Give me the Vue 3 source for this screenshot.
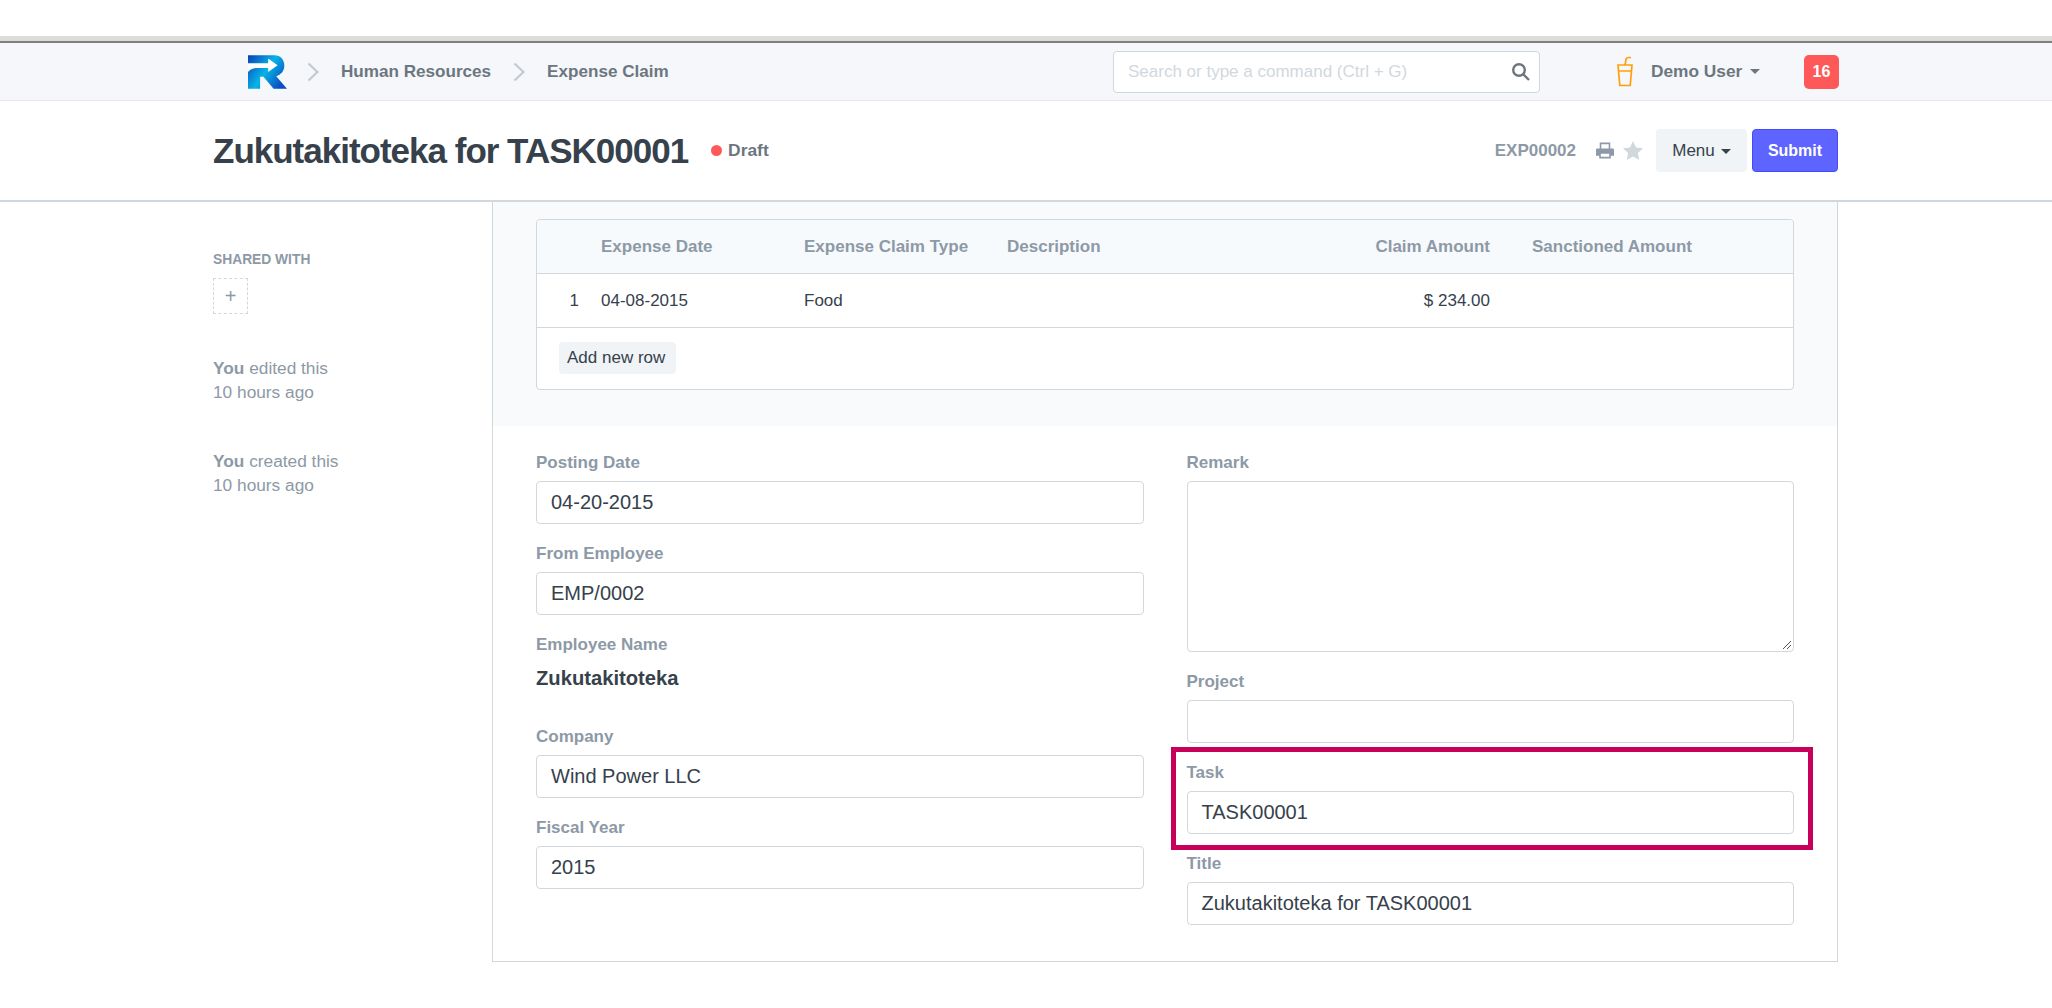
<script setup>
const leftFields = [
  { label: 'Posting Date', value: '04-20-2015' },
  { label: 'From Employee', value: 'EMP/0002' },
  { label: 'Employee Name', value: 'Zukutakitoteka', plain: true },
  { label: 'Company', value: 'Wind Power LLC' },
  { label: 'Fiscal Year', value: '2015' },
]
const rightFields = [
  { label: 'Project', value: '' },
  { label: 'Task', value: 'TASK00001' },
  { label: 'Title', value: 'Zukutakitoteka for TASK00001' },
]
</script>

<template>
  <div class="page">
    <div class="chrome"></div>
    <nav class="nav">
      <div class="wrap nav-in">
        <svg class="logo" viewBox="0 0 116 100">
          <defs>
            <linearGradient id="rg" x1="0" y1="0" x2="1" y2="0.6">
              <stop offset="0" stop-color="#0a3fb8" />
              <stop offset="0.55" stop-color="#08b4e6" />
              <stop offset="1" stop-color="#0a4fc4" />
            </linearGradient>
          </defs>
          <path fill="url(#rg)" d="M0 0H78C98 0 108 14 108 31C108 48 98 58 84 63L116 100H76L46 64H36V100H0Z" />
          <path fill="#fff" d="M0 24H60V10L88 30L60 50V38H28C14 38 6 42 0 50Z" />
        </svg>
        <svg class="chev" viewBox="0 0 12 20"><path d="M1.5 1.5L10.5 10L1.5 18.5" /></svg>
        <span class="crumb">Human Resources</span>
        <svg class="chev" viewBox="0 0 12 20"><path d="M1.5 1.5L10.5 10L1.5 18.5" /></svg>
        <span class="crumb">Expense Claim</span>
        <div class="search">
          <span class="placeholder">Search or type a command (Ctrl + G)</span>
          <svg class="search-ic" viewBox="0 0 20 20"><circle cx="8" cy="8" r="5.8" /><path d="M12.5 12.5L18 18" /></svg>
        </div>
        <svg class="cup" viewBox="0 0 16 31">
          <path d="M8 9L9 3.5Q9.4 1.5 11.5 1.5H14" />
          <path d="M1 9H15L13.2 29.5H2.8ZM1.6 15H14.4" />
        </svg>
        <span class="user">Demo User</span>
        <span class="caret user-caret"></span>
        <span class="badge">16</span>
      </div>
    </nav>
    <header class="head">
      <div class="wrap head-in">
        <h1>Zukutakitoteka for TASK00001</h1>
        <span class="dot"></span>
        <span class="status">Draft</span>
        <span class="docname">EXP00002</span>
        <svg class="print" viewBox="0 0 18 18">
          <path d="M4 7V1.5H14V7H16.5A1 1 0 0 1 17.5 8V14H14.5V16.5H3.5V14H.5V8A1 1 0 0 1 1.5 7ZM5.5 7H12.5V3H5.5ZM5 12V15H13V12Z" fill-rule="evenodd" />
        </svg>
        <svg class="star" viewBox="0 0 20 19"><path d="M10 0L13 6.4L20 7.3L14.9 12.1L16.2 19L10 15.6L3.8 19L5.1 12.1L0 7.3L7 6.4Z" /></svg>
        <button class="btn menu">Menu<span class="caret dark"></span></button>
        <button class="btn submit">Submit</button>
      </div>
    </header>
    <main class="wrap body">
      <aside class="side">
        <div class="shared">SHARED WITH</div>
        <div class="add-share">+</div>
        <p class="log"><b>You</b> edited this<br />10 hours ago</p>
        <p class="log"><b>You</b> created this<br />10 hours ago</p>
      </aside>
      <section class="card">
        <div class="grey">
          <div class="table">
            <div class="row th">
              <span></span>
              <span>Expense Date</span>
              <span>Expense Claim Type</span>
              <span>Description</span>
              <span class="r">Claim Amount</span>
              <span class="sanct">Sanctioned Amount</span>
            </div>
            <div class="row td">
              <span class="r">1</span>
              <span>04-08-2015</span>
              <span>Food</span>
              <span></span>
              <span class="r">$ 234.00</span>
              <span></span>
            </div>
            <div class="tfoot"><button class="add">Add new row</button></div>
          </div>
        </div>
        <div class="form">
          <div class="col">
            <div v-for="f in leftFields" :key="f.label" class="field">
              <label>{{ f.label }}</label>
              <div v-if="f.plain" class="plain">{{ f.value }}</div>
              <div v-else class="input">{{ f.value }}</div>
            </div>
          </div>
          <div class="col rightcol">
            <div class="field">
              <label>Remark</label>
              <div class="input area">
                <svg class="grip" viewBox="0 0 10 10"><path d="M1 9L9 1M5 9L9 5" /></svg>
              </div>
            </div>
            <div v-for="f in rightFields" :key="f.label" class="field">
              <label>{{ f.label }}</label>
              <div class="input">{{ f.value }}</div>
            </div>
            <div class="highlight"></div>
          </div>
        </div>
      </section>
    </main>
  </div>
</template>

<style>
html, body { margin: 0; background: #fff; }
</style>

<style scoped>
.page {
  position: relative;
  width: 2052px;
  height: 1008px;
  overflow: hidden;
  background: #fff;
  font-family: "Liberation Sans", Arial, sans-serif;
  color: #36414c;
}
.chrome {
  height: 36px;
  border-bottom: 7px solid #dcdcda;
  position: relative;
}
.chrome::after {
  content: "";
  position: absolute;
  left: 0;
  right: 0;
  bottom: -7px;
  height: 2px;
  background: #7f7f7f;
}
.wrap {
  width: 1626px;
  margin-left: 213px;
}
.nav {
  height: 57px;
  background: #f5f7fa;
  border-bottom: 1px solid #e6e9ee;
}
.nav-in {
  height: 57px;
  display: flex;
  align-items: center;
}
.logo { width: 39px; height: 34px; margin-left: 35px; }
.chev { width: 12px; height: 20px; margin-left: 20px; }
.chev path { fill: none; stroke: #c0c8d0; stroke-width: 2; }
.crumb {
  margin-left: 22px;
  margin-right: 2px;
  font-size: 17.1px;
  font-weight: 700;
  color: #6c7680;
}
.search {
  box-sizing: border-box;
  width: 427px;
  height: 42px;
  position: absolute;
  left: 1113px;
  top: 51px;
  background: #fff;
  border: 1px solid #d1d8dd;
  border-radius: 4px;
  display: flex;
  align-items: center;
  justify-content: space-between;
  padding: 0 8px 0 14px;
}
.placeholder { font-size: 17px; color: #d1d8dd; }
.search-ic { width: 20px; height: 20px; }
.search-ic circle, .search-ic path { fill: none; stroke: #6c7680; stroke-width: 2.4; }
.cup {
  position: absolute;
  left: 1617px;
  top: 56px;
  width: 16px;
  height: 31px;
  fill: none;
  stroke: #ffa00a;
  stroke-width: 1.7;
}
.user {
  position: absolute;
  left: 1651px;
  top: 61px;
  font-size: 17.3px;
  font-weight: 700;
  color: #6c7680;
}
.caret {
  display: inline-block;
  width: 0;
  height: 0;
  border-left: 5px solid transparent;
  border-right: 5px solid transparent;
  border-top: 5px solid #6c7680;
}
.user-caret { position: absolute; left: 1750px; top: 69px; }
.badge {
  position: absolute;
  left: 1804px;
  top: 55px;
  width: 35px;
  height: 34px;
  border-radius: 5px;
  background: #ff5858;
  color: #fff;
  font-size: 16px;
  font-weight: 700;
  display: flex;
  align-items: center;
  justify-content: center;
}
.head {
  height: 99px;
  border-bottom: 2px solid #d1d8dd;
}
.head-in {
  height: 99px;
  display: flex;
  align-items: center;
}
h1 {
  margin: 0;
  font-size: 35px;
  font-weight: 700;
  color: #36414c;
  letter-spacing: -1px;
}
.dot {
  width: 11px;
  height: 11px;
  border-radius: 50%;
  background: #ff5858;
  margin-left: 23px;
}
.status {
  margin-left: 6px;
  font-size: 17.4px;
  font-weight: 700;
  color: #6c7680;
}
.docname {
  margin-left: auto;
  font-size: 17px;
  font-weight: 700;
  color: #8d99a6;
}
.print { width: 20px; height: 19px; margin-left: 19px; fill: #8d99a6; }
.star { width: 20px; height: 19px; margin-left: 8px; fill: #d1d8dd; }
.btn {
  border: 0;
  font-family: inherit;
  font-size: 17px;
  height: 43px;
  border-radius: 4px;
}
.menu {
  margin-left: 13px;
  width: 91px;
  background: #f0f4f7;
  color: #36414c;
}
.caret.dark { border-top-color: #36414c; margin-left: 6px; vertical-align: 2px; }
.submit {
  margin-left: 5px;
  width: 86px;
  background: #5e64ff;
  border: 1px solid #444bff;
  color: #fff;
  font-size: 16px;
  font-weight: 700;
  margin-right: 1px;
}
.body {
  display: flex;
  height: 761px;
}
.side {
  width: 279px;
  flex: none;
  padding-top: 50px;
  color: #8d99a6;
}
.shared { font-size: 13.8px; font-weight: 700; color: #8d99a6; line-height: 16px; }
.add-share {
  box-sizing: border-box;
  width: 35px;
  height: 36px;
  margin-top: 10px;
  border: 1px dashed #d1d8dd;
  color: #8d99a6;
  font-size: 20px;
  display: flex;
  align-items: center;
  justify-content: center;
}
.log {
  margin: 42px 0 0;
  font-size: 17.3px;
  line-height: 24px;
}
.log + .log { margin-top: 45px; }
.log b { font-weight: 700; }
.card {
  box-sizing: border-box;
  width: 1346px;
  height: 760px;
  border: 1px solid #d1d8dd;
  border-top: 0;
}
.grey {
  box-sizing: border-box;
  height: 224px;
  background: #f9fafc;
  padding: 17px 43px 0;
}
.table {
  box-sizing: border-box;
  height: 171px;
  background: #fff;
  border: 1px solid #d1d8dd;
  border-radius: 4px;
  font-size: 17px;
}
.row {
  display: grid;
  grid-template-columns: 53px 203px 203px 305px 200px 1fr;
  align-items: center;
  height: 54px;
  box-sizing: border-box;
  border-bottom: 1px solid #d1d8dd;
}
.row span { padding: 0 11px; }
.row .sanct { padding-left: 31px; }
.th {
  background: #f7fafc;
  color: #8d99a6;
  font-weight: 700;
  border-radius: 4px 4px 0 0;
}
.td { color: #36414c; }
.r { text-align: right; }
.tfoot { padding: 14px 22px; }
.add {
  height: 32px;
  border: 0;
  border-radius: 4px;
  padding: 0 11px 0 8px;
  background: #f0f4f7;
  color: #36414c;
  font-family: inherit;
  font-size: 17px;
}
.form {
  display: flex;
  gap: 43px;
  padding: 27px 43px 0;
}
.col { flex: 1; }
.rightcol { position: relative; }
.field { margin-bottom: 20px; }
.field label {
  display: block;
  height: 20px;
  line-height: 20px;
  margin-bottom: 8px;
  font-size: 17px;
  font-weight: 700;
  color: #8d99a6;
}
.input {
  box-sizing: border-box;
  height: 43px;
  line-height: 41px;
  padding: 0 14px;
  border: 1px solid #d1d8dd;
  border-radius: 4px;
  font-size: 20px;
  color: #36414c;
  background: #fff;
}
.area { height: 171px; position: relative; }
.grip { position: absolute; right: 1px; bottom: 1px; width: 10px; height: 10px; }
.grip path { stroke: #555; stroke-width: 1; fill: none; }
.plain {
  height: 44px;
  line-height: 30px;
  font-size: 20.2px;
  font-weight: 700;
  color: #36414c;
}
.highlight {
  position: absolute;
  left: -16px;
  right: -19px;
  top: 294px;
  height: 103px;
  box-sizing: border-box;
  border: 5px solid #c8005a;
  pointer-events: none;
}
</style>
